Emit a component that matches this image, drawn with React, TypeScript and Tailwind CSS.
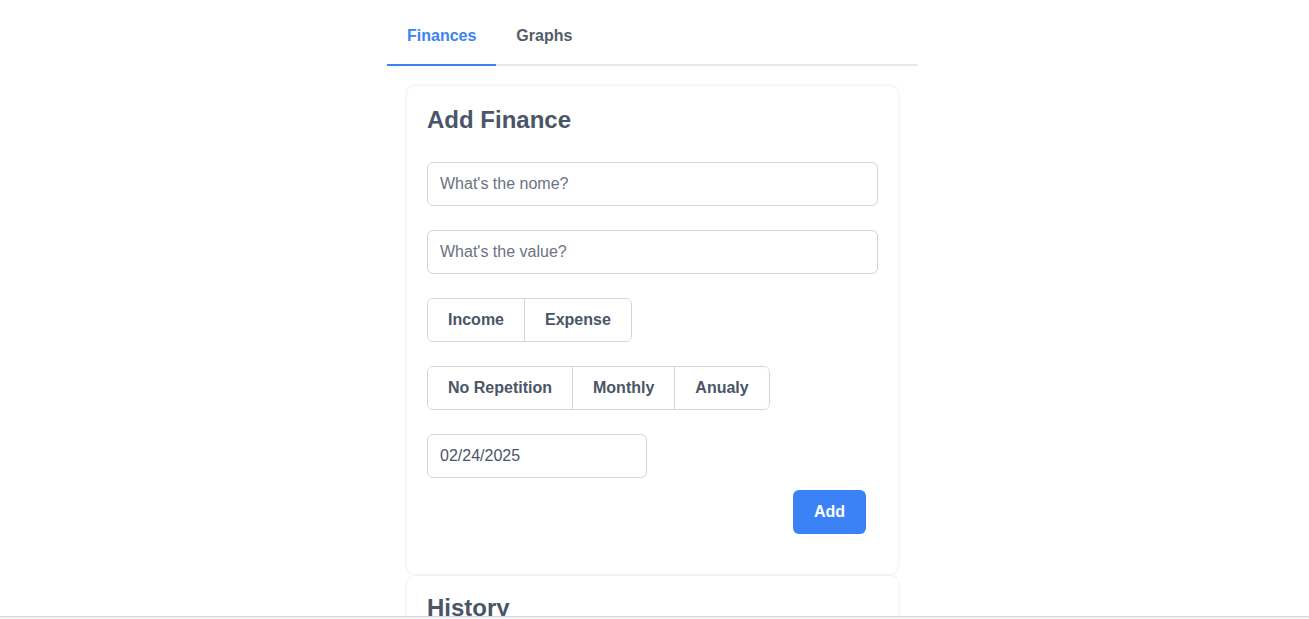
import { useState } from "react";

const inputClass =
    "h-11 rounded-md border border-[#d1d5db] px-3 text-base text-[#4a5568] placeholder:text-[#6b7280] outline-none";

function Segmented({ options, value, onChange }: { options: string[]; value: string; onChange: (v: string) => void }) {
    return (
        <div className="flex w-fit rounded-md border border-[#d1d5db] overflow-hidden">
            {options.map((opt, i) => (
                <button
                    key={opt}
                    onClick={() => onChange(opt)}
                    className={`h-[42px] px-5 font-bold text-base text-[#4a5568] ${i > 0 ? "border-l border-[#d1d5db]" : ""} ${value === opt ? "bg-gray-50" : "bg-white"}`}
                >
                    {opt}
                </button>
            ))}
        </div>
    );
}

export default function App() {
    const [tab, setTab] = useState("Finances");
    const [kind, setKind] = useState("");
    const [repeat, setRepeat] = useState("");

    return (
        <div className="h-[619px] overflow-hidden bg-white font-['Liberation_Sans',Arial,sans-serif]">
            <div className="mx-auto w-[535px] pr-1 pt-2">
                <div className="flex border-b-2 border-[#e5e7eb]">
                    {["Finances", "Graphs"].map((t) => (
                        <button
                            key={t}
                            onClick={() => setTab(t)}
                            className={`-mb-[2px] border-b-2 px-5 py-4 text-base font-bold leading-6 ${
                                tab === t ? "border-[#3b82f6] text-[#3b82f6]" : "border-transparent text-[#555c68]"
                            }`}
                        >
                            {t}
                        </button>
                    ))}
                </div>

                <div className="mx-5 mt-5 rounded-lg bg-white px-5 pt-[18px] pb-4 shadow-[0_0_3px_rgba(0,0,0,0.12)]">
                    <h2 className="mb-[26px] text-2xl font-bold leading-8 text-[#4a5568]">Add Finance</h2>
                    <div className="flex flex-col gap-6">
                        <input className={`${inputClass} w-full`} placeholder="What's the nome?" />
                        <input className={`${inputClass} w-full`} placeholder="What's the value?" />
                        <Segmented options={["Income", "Expense"]} value={kind} onChange={setKind} />
                        <Segmented options={["No Repetition", "Monthly", "Anualy"]} value={repeat} onChange={setRepeat} />
                        <input className={`${inputClass} w-[220px]`} defaultValue="02/24/2025" />
                    </div>
                    <div className="mt-3 mb-6 mr-3 flex justify-end">
                        <button className="h-11 rounded-md bg-[#3b82f6] px-[21px] text-base font-bold text-white">Add</button>
                    </div>
                </div>

                <div className="mx-5 mt-[2px] rounded-lg bg-white px-5 pt-4 pb-6 shadow-[0_0_3px_rgba(0,0,0,0.12)]">
                    <h2 className="text-2xl font-bold leading-8 text-[#4a5568]">History</h2>
                    <div className="h-40" />
                </div>
            </div>
            <div className="fixed bottom-0 left-0 right-0 h-[3px] border-t border-gray-300 bg-gray-100" />
        </div>
    );
}
